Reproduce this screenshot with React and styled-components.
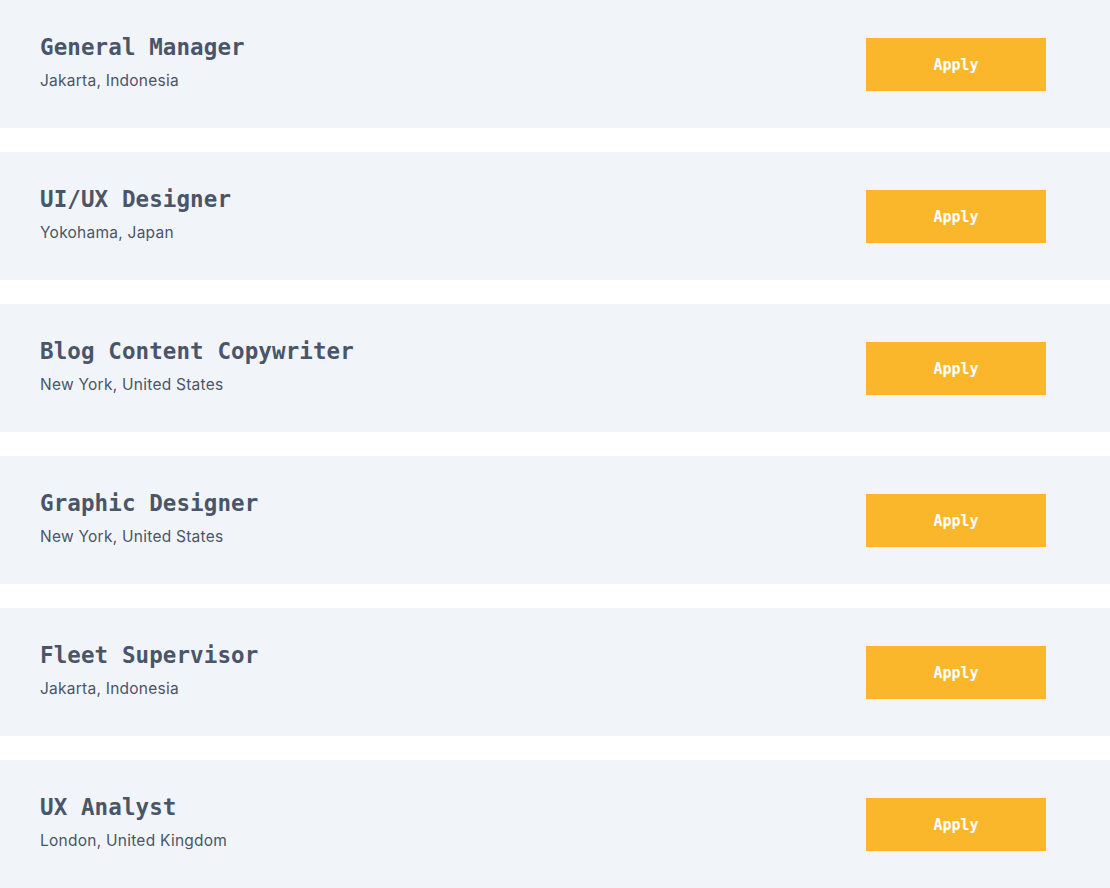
import styled, { createGlobalStyle } from "styled-components";

const jobs = [
  { id: 1, title: "General Manager", place: "Jakarta, Indonesia" },
  { id: 2, title: "UI/UX Designer", place: "Yokohama, Japan" },
  { id: 3, title: "Blog Content Copywriter", place: "New York, United States" },
  { id: 4, title: "Graphic Designer", place: "New York, United States" },
  { id: 5, title: "Fleet Supervisor", place: "Jakarta, Indonesia" },
  { id: 6, title: "UX Analyst", place: "London, United Kingdom" },
];

const GlobalStyle = createGlobalStyle`
  body {
    margin: 0;
    background: #ffffff;
    font-family: "Inter", "Noto Sans", sans-serif;
  }
`;

const List = styled.div`
  display: flex;
  flex-direction: column;
  gap: 24px;
`;

const Row = styled.div`
  height: 128px;
  background-color: #f1f4f9;
  display: flex;
  align-items: center;
  justify-content: space-between;
  padding: 0 64px 0 40px;
  box-sizing: border-box;
`;

const Info = styled.div`
  display: flex;
  flex-direction: column;
  margin-bottom: 4px;
`;

const Title = styled.h3`
  margin: 0 0 10px;
  font-family: "DejaVu Sans Mono", "Liberation Mono", monospace;
  font-size: 22.5px;
  font-weight: 700;
  line-height: 28px;
  color: #4a5568;
  letter-spacing: 0.1px;
`;

const Place = styled.div`
  font-size: 15.5px;
  line-height: 20px;
  letter-spacing: 0.25px;
  color: #4a5568;
`;

const Button = styled.button`
  width: 180px;
  height: 53px;
  padding: 2px 0 0;
  border: none;
  background-color: #fbb72c;
  color: #ffffff;
  font-family: "DejaVu Sans Mono", "Liberation Mono", monospace;
  font-size: 15px;
  font-weight: 700;
  cursor: pointer;
`;

export default function App() {
  return (
    <>
      <GlobalStyle />
      <List>
        {jobs.map(({ id, title, place }) => (
          <Row key={id}>
            <Info>
              <Title>{title}</Title>
              <Place>{place}</Place>
            </Info>
            <Button>Apply</Button>
          </Row>
        ))}
      </List>
    </>
  );
}
